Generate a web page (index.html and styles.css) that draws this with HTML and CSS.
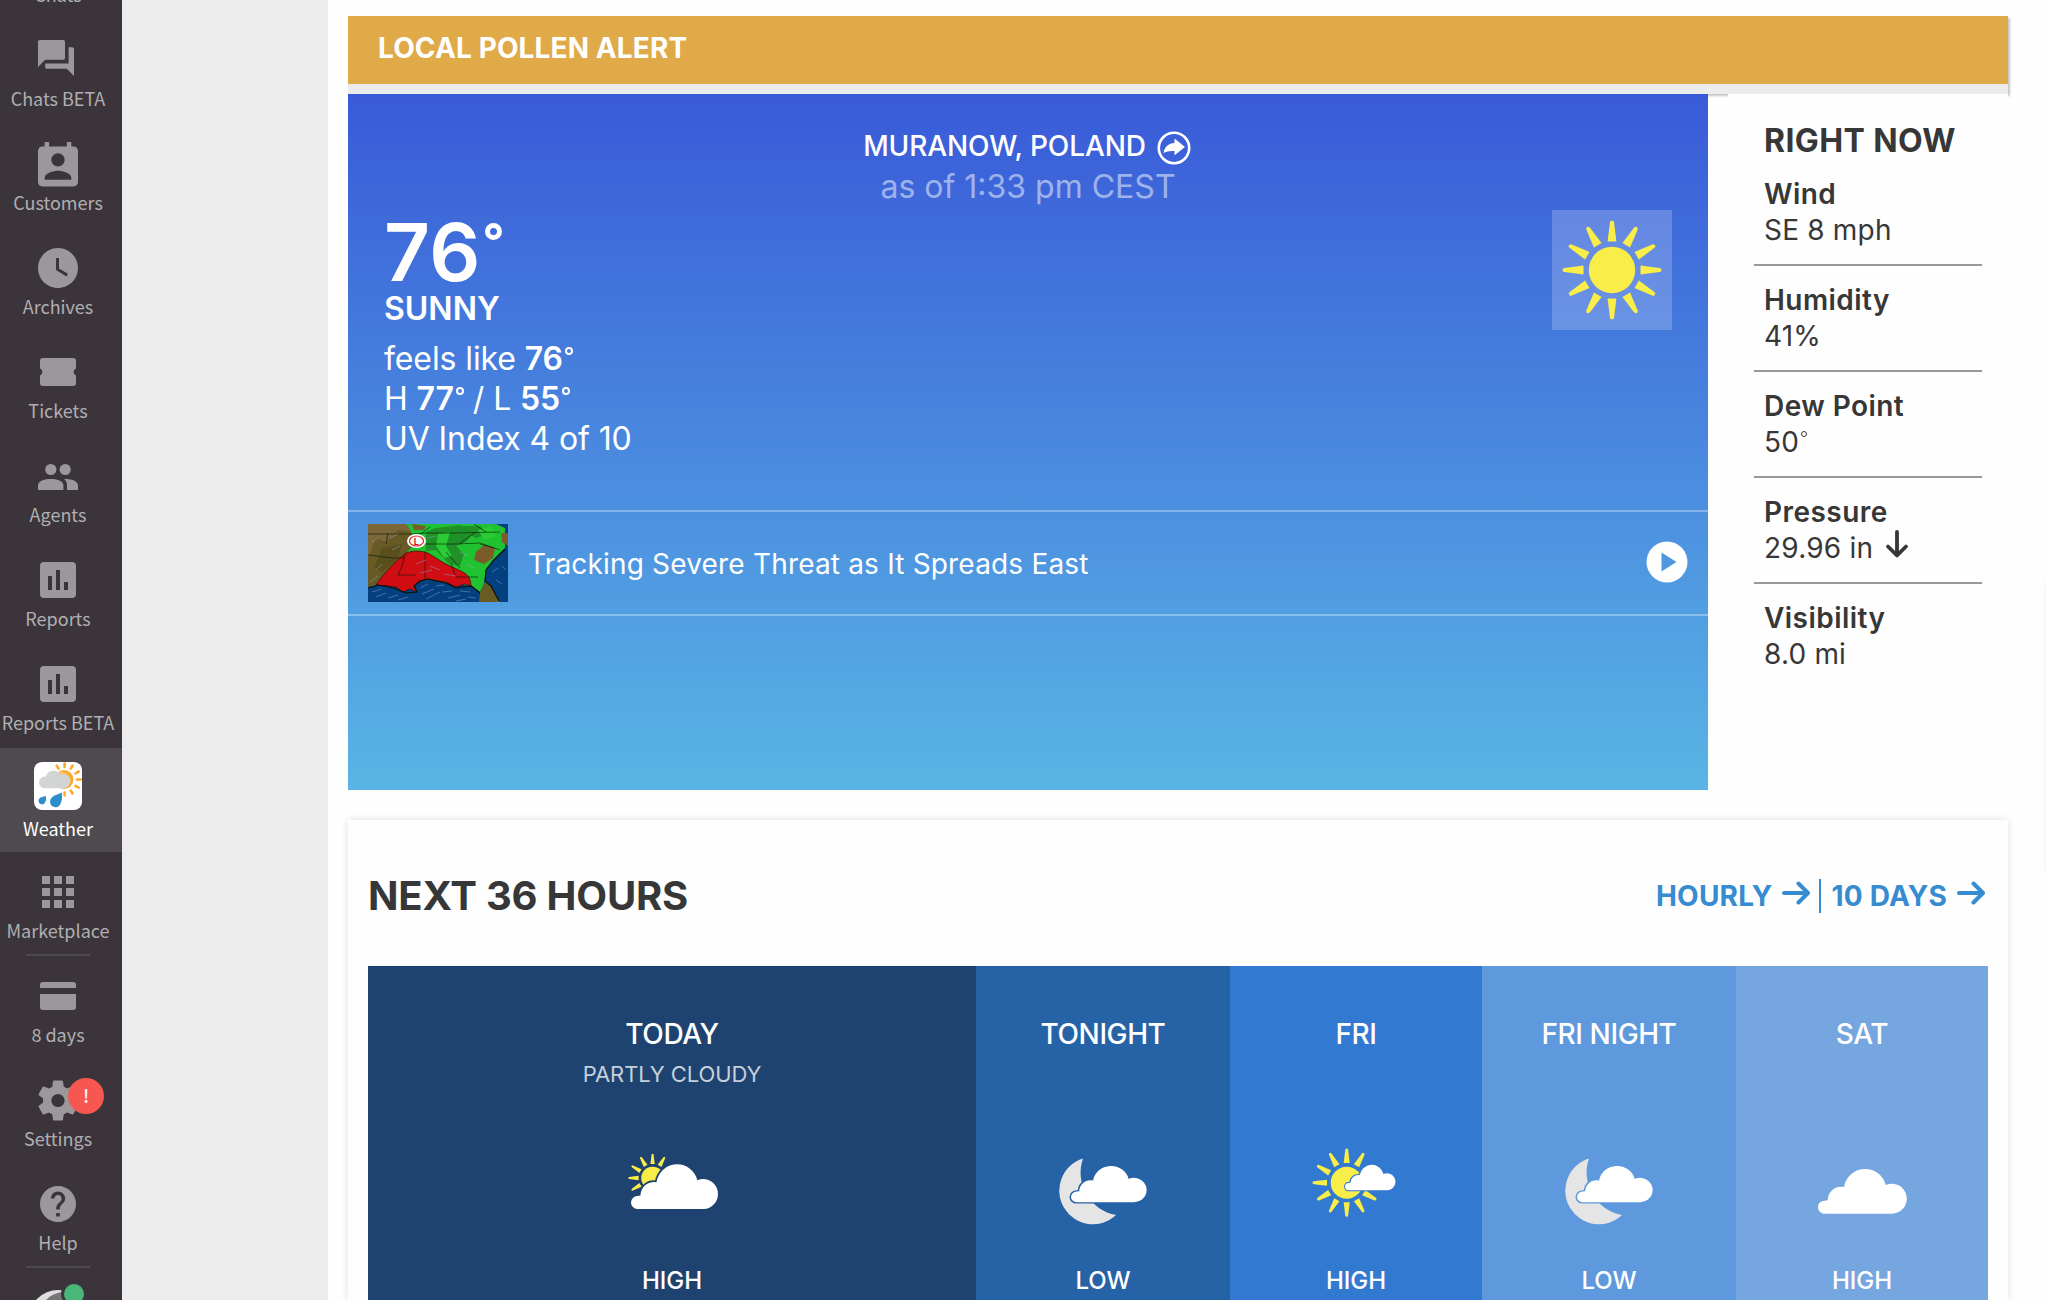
FILE: index.html
```html
<!DOCTYPE html>
<html lang="en">
<head>
<meta charset="utf-8">
<title>Weather</title>
<link rel="stylesheet" href="styles.css">
</head>
<body>
<svg class="defs" width="0" height="0" aria-hidden="true">
  <defs>
    <path id="ray" d="M-4.4-28.5L-2.1-47.6Q-1.8-49.6 0-49.6T2.1-47.6L4.4-28.5Z"/>
    <g id="sun">
      <circle r="23.2"/>
      <use href="#ray"/><use href="#ray" transform="rotate(30)"/><use href="#ray" transform="rotate(60)"/>
      <use href="#ray" transform="rotate(90)"/><use href="#ray" transform="rotate(120)"/><use href="#ray" transform="rotate(150)"/>
      <use href="#ray" transform="rotate(180)"/><use href="#ray" transform="rotate(210)"/><use href="#ray" transform="rotate(240)"/>
      <use href="#ray" transform="rotate(270)"/><use href="#ray" transform="rotate(300)"/><use href="#ray" transform="rotate(330)"/>
    </g>
    <path id="cloud" d="M6.5 45A6.5 6.5 0 0 1 6.5 32L9.7 31.6A13.5 13.5 0 0 1 26 18.3A21.3 21.3 0 0 1 67.7 16.3A15 15 0 1 1 73.5 45Z"/>
    <path id="moon" d="M40 18.5A33.6 33.6 0 1 0 73 75A43 43 0 0 1 40 18.5Z"/>
    <path id="report" d="M19 3H5a2 2 0 0 0-2 2v14a2 2 0 0 0 2 2h14a2 2 0 0 0 2-2V5a2 2 0 0 0-2-2zM9 17H7v-7h2zm4 0h-2V7h2zm4 0h-2v-4h2z"/>
  </defs>
</svg>

<nav class="sidebar">
  <a class="item"><span class="icon"></span><span class="label">Chats</span></a>
  <a class="item"><svg class="icon" viewBox="0 0 48 48"><path transform="translate(.4 .4) scale(1.8)" d="M21 6h-2v9H6v2c0 .55.45 1 1 1h11l4 4V7c0-.55-.45-1-1-1zm-4 6V3c0-.55-.45-1-1-1H3c-.55 0-1 .45-1 1v14l4-4h10c.55 0 1-.45 1-1z"/></svg><span class="label">Chats BETA</span></a>
  <a class="item"><svg class="icon" viewBox="0 0 48 48"><path transform="translate(-2.67 -.2) scale(2.222)" d="M19 3h-1V1h-2v2H8V1H6v2H5c-1.11 0-2 .9-2 2v14c0 1.1.89 2 2 2h14c1.1 0 2-.9 2-2V5c0-1.100-.9-2-2-2zm-7 3c1.660 0 3 1.340 3 3s-1.340 3-3 3-3-1.340-3-3 1.340-3 3-3zm6 12H6v-1c0-2 4-3.100 6-3.100s6 1.100 6 3.100z"/></svg><span class="label">Customers</span></a>
  <a class="item"><svg class="icon" viewBox="0 0 24 24"><path d="M12 2C6.500 2 2 6.500 2 12s4.500 10 10 10 10-4.500 10-10S17.500 2 12 2zm4.200 14.200L11 13V7h1.500v5.200l4.500 2.700z"/></svg><span class="label">Archives</span></a>
  <a class="item"><svg class="icon" viewBox="0 0 48 48"><path d="M9 10H39Q42 10 42 13V20.600A3.600 3.600 0 0 0 42 27.400V35Q42 38 39 38H9Q6 38 6 35V27.400A3.600 3.600 0 0 0 6 20.600V13Q6 10 9 10Z"/></svg><span class="label">Tickets</span></a>
  <a class="item"><svg class="icon" viewBox="0 0 48 48"><circle cx="16.800" cy="17.500" r="5.600"/><circle cx="31.200" cy="17.500" r="5.600"/><path d="M4 38V33.500C4 28.500 11 27 16.800 27S29.400 28.500 29.400 33.500V38ZM33 38V33.500C33 30.500 32.200 28.600 30 27C36 26.600 44 28.500 44 33.500V38Z"/></svg><span class="label">Agents</span></a>
  <a class="item"><svg class="icon" viewBox="0 0 24 24"><use href="#report"/></svg><span class="label">Reports</span></a>
  <a class="item"><svg class="icon" viewBox="0 0 24 24"><use href="#report"/></svg><span class="label">Reports BETA</span></a>
  <a class="item active"><svg class="icon" viewBox="0 0 48 48">
    <rect width="48" height="48" rx="8" fill="#fff"/>
    <circle cx="30" cy="17.500" r="9.400" fill="#fba92c"/>
    <g stroke="#fba92c" stroke-width="2.600" stroke-linecap="round"><path d="M30.600 1.500V5M38.500 3.600L36.700 6.700M44.700 9.500L41.500 11.300M46.800 17.500H43M44.700 25.600L41.500 23.800M38.500 31.500L36.700 28.500M30.600 33.500V30.500M22.700 3.600L24.500 6.700"/></g>
    <circle cx="27" cy="18" r="8.500" fill="#fff" opacity=".3"/>
    <path fill="#d2d5d4" d="M11 26.300A5.900 5.900 0 0 1 10.800 14.500H12A7.800 7.800 0 0 1 26.300 12.600A7.200 7.200 0 1 1 28.500 26.300Z"/>
    <path fill="#2e8dcb" d="M28 30.500C28 36 28.200 38 27 40.500A5.500 5.500 0 1 1 18 35.500C20.500 32.500 24 32.500 28 30.500ZM12 34C12 37.500 12 38.700 11.300 40A3.500 3.500 0 1 1 5.400 36.500C7 34.700 9 35 12 34Z"/>
  </svg><span class="label">Weather</span></a>
  <a class="item ruled"><svg class="icon" viewBox="0 0 24 24"><path d="M4 4h4v4H4zM10 4h4v4h-4zM16 4h4v4h-4zM4 10h4v4H4zM10 10h4v4h-4zM16 10h4v4h-4zM4 16h4v4H4zM10 16h4v4h-4zM16 16h4v4h-4z"/></svg><span class="label">Marketplace</span></a>
  <a class="item"><svg class="icon" viewBox="0 0 48 48"><path d="M6 16V13Q6 10 9 10H39Q42 10 42 13V16ZM6 22H42V35Q42 38 39 38H9Q6 38 6 35Z"/></svg><span class="label">8 days</span></a>
  <a class="item"><svg class="icon" viewBox="0 0 24 24"><path transform="translate(0 .25)" d="M19.430 12.980c.04-.32.07-.64.07-.98s-.03-.66-.07-.98l2.110-1.650c.19-.15.24-.42.12-.64l-2-3.460c-.12-.22-.39-.3-.61-.22l-2.490 1c-.52-.4-1.080-.73-1.690-.98l-.38-2.650C14.460 2.180 14.250 2 14 2h-4c-.25 0-.46.18-.49.42l-.38 2.650c-.61.25-1.170.59-1.690.98l-2.490-1c-.23-.09-.49 0-.61.22l-2 3.460c-.13.22-.07.49.12.64l2.110 1.650c-.04.32-.07.65-.07.98s.03.66.07.98l-2.110 1.650c-.19.15-.24.42-.12.64l2 3.460c.12.22.39.3.61.22l2.490-1c.52.4 1.080.73 1.690.98l.38 2.650c.03.24.24.42.49.42h4c.25 0 .46-.18.49-.42l.38-2.650c.61-.25 1.170-.59 1.690-.98l2.490 1c.23.09.49 0 .61-.22l2-3.460c.12-.22.07-.49-.12-.64zM12 15.300c-1.820 0-3.300-1.480-3.300-3.300s1.480-3.300 3.300-3.300 3.300 1.480 3.300 3.300-1.480 3.300-3.300 3.300z"/></svg><span class="label">Settings</span><span class="badge">!</span></a>
  <a class="item ruled"><svg class="icon" viewBox="0 0 24 24"><path transform="translate(1.200 1.200) scale(.9)" d="M12 2C6.480 2 2 6.480 2 12s4.480 10 10 10 10-4.480 10-10S17.520 2 12 2zm1 17h-2v-2h2zm2.070-7.750l-.9.920C13.450 12.900 13 13.500 13 15h-2v-.5c0-1.100.45-2.100 1.170-2.830l1.240-1.260c.37-.36.59-.86.59-1.410 0-1.100-.9-2-2-2s-2 .9-2 2H8c0-2.210 1.790-4 4-4s4 1.790 4 4c0 .88-.36 1.680-.93 2.250z"/></svg><span class="label">Help</span></a>
  <a class="item last"><svg class="avatar" viewBox="0 0 60 20"><circle cx="30" cy="39" r="29" fill="#dedede"/><path d="M18 20Q23 14 34 12V20Z" fill="#777577"/><circle cx="46" cy="14" r="13" fill="#3b353b"/><circle cx="46" cy="14" r="10" fill="#48b778"/></svg></a>
</nav>

<main class="page">
  <section class="alert"><h2>LOCAL POLLEN ALERT</h2></section>

  <div class="top">
    <section class="current">
      <header class="place">
        <h1>MURANOW, POLAND
          <svg width="34" height="34" viewBox="0 0 34 34"><circle cx="17" cy="17" r="15.200" fill="none" stroke="#fff" stroke-width="2.600"/><path fill="#fff" d="M17.500 7.500L28 16L17.500 24.300V20C12.500 19.600 9.500 20.500 6.500 22C7.500 16 11.500 12.300 17.500 12Z"/></svg>
        </h1>
        <p>as of 1:33 pm CEST</p>
      </header>
      <div class="conditions">
        <div>
          <p class="temp">76<i class="deg big"></i></p>
          <p class="phrase">SUNNY</p>
          <p class="line">feels like <b>76<i class="deg"></i></b></p>
          <p class="line">H <b>77<i class="deg"></i></b> / L <b>55<i class="deg"></i></b></p>
          <p class="line uv">UV Index 4 of 10</p>
        </div>
        <svg class="sky" viewBox="-60 -60 120 120"><use href="#sun" fill="#f9ed49"/></svg>
      </div>
      <a class="video">
        <svg class="thumb" viewBox="0 0 140 78">
          <rect width="140" height="78" fill="#043f80"/>
          <path fill="#685a24" d="M0 0H58L50 28L8 61L0 63Z"/>
          <path fill="#8a6f48" d="M0 0H50L44 8L30 6L18 18L8 14L0 34Z" opacity=".6"/>
          <path fill="#4a4415" d="M14 24L34 20L30 34L14 48L6 44Z" opacity=".5"/>
          <path fill="#21c232" d="M38 0H128L137 4V24L125 36L118 46L116 60L112 68L104 62L50 54L39 28L47 20L42 5Z"/>
          <path fill="#1f9127" d="M58 8L68 4L92 1L106 8L98 18L88 22L96 30L92 42L80 39L68 26L58 27ZM86 2H112L120 10L108 14Z"/>
          <path fill="#2acb35" d="M70 10L82 8L78 22L84 32L76 34L68 22ZM110 6L124 2L128 12L116 16Z"/>
          <path fill="#7c5b2b" d="M108 28L116 21L127 24L125 34L116 40L106 36ZM133 9H140V22L134 18ZM44 0L58 2L56 6L46 6Z"/>
          <path fill="#d00d12" stroke="#300" stroke-width=".6" d="M8 61Q21 42 38 29Q48 25 60 29L76 39L95 48Q103 52 103 62L97 60L88 63L78 58L70 57L60 55L52 57L46 62L49 68L42 65L35 68L28 63L18 62Z"/>
          <path fill="#695b22" d="M112 68L118 57L122 61L127 69L132 78H111Z"/>
          <g fill="none" stroke="#091507" stroke-width=".6"><path d="M0 10H44L58 9H88L132 8M52 20L88 20L112 19L132 26M37 30L34 42L30 51H48M57 27V56M83 39L88 53H110M92 19L108 8M62 3L50 12L44 24M106 0L118 8M112 20L126 24M78 28L92 44M18 20L20 9M0 31L24 34L37 34"/><path stroke-width="1.200" d="M8 61L18 62L28 65L38 69L49 68L46 62L52 57L60 55L78 59L88 64L103 62L112 69M0 64L8 62M137 25L125 37L118 46L117 57L123 62L131 77"/></g>
          <g fill="none" stroke="#8fb0d8" stroke-width=".6" opacity=".75"><path d="M4 68L14 65M8 73L18 69M20 74L30 71M30 76L40 73M52 64L60 60M54 70L66 65M58 75L72 68M68 62L76 61M74 68L84 67M80 74L92 71M92 67L102 68M88 77L98 75M100 73L108 74M124 48L130 44M134 42L138 46M128 56L134 60M2 58L10 52M8 46L14 40M48 40L58 36M62 42L72 46M52 49L64 46M76 50L88 52M4 18L10 14M22 14L30 10M24 26L32 22M60 14L68 12M98 40L106 44M92 28L100 32"/></g>
          <ellipse cx="48.500" cy="17" rx="9.500" ry="7" fill="#fff"/><ellipse cx="48.500" cy="17" rx="7" ry="5" fill="none" stroke="#e2222c" stroke-width="1.200"/><text x="45.800" y="20.500" font-size="9" font-weight="700" fill="#d8141d">L</text>
        </svg>
        <span class="headline">Tracking Severe Threat as It Spreads East</span>
        <svg class="play" viewBox="0 0 42 42"><circle cx="21" cy="21" r="20.500" fill="#fff"/><path d="M15.500 11.500L30.500 21L15.500 30.500Z" fill="#4f98e0"/></svg>
      </a>
    </section>

    <section class="now">
      <h2>RIGHT NOW</h2>
      <dl>
        <div><dt>Wind</dt><dd>SE 8 mph</dd></div>
        <div><dt>Humidity</dt><dd>41%</dd></div>
        <div><dt>Dew Point</dt><dd>50<i class="deg small"></i></dd></div>
        <div><dt>Pressure</dt><dd>29.96 in <svg class="trend" viewBox="0 0 24 30"><path d="M12 3V26M3 17.500L12 26.500L21 17.500" fill="none" stroke="#373737" stroke-width="3.800" stroke-linecap="round" stroke-linejoin="round"/></svg></dd></div>
        <div><dt>Visibility</dt><dd>8.0 mi</dd></div>
      </dl>
    </section>
    <aside class="rail"></aside>
  </div>

  <section class="next">
    <header>
      <h2>NEXT 36 HOURS</h2>
      <nav class="links">
        <a>HOURLY <svg viewBox="0 0 28 24"><path d="M2 12H25M16.500 2.500L26 12L16.500 21.500"/></svg></a>
        <a>10 DAYS <svg viewBox="0 0 28 24"><path d="M2 12H25M16.500 2.500L26 12L16.500 21.500"/></svg></a>
      </nav>
    </header>
    <div class="periods">
      <article class="today"><h3>TODAY</h3><p class="sub">PARTLY CLOUDY</p>
        <svg viewBox="0 0 120 100"><use href="#sun" fill="#f9ed49" transform="translate(40.600 38) scale(.49)"/><use href="#cloud" class="fog" transform="translate(19 24) scale(.98 1)"/></svg>
        <p class="hl">HIGH</p></article>
      <article class="tonight"><h3>TONIGHT</h3><p class="sub"></p>
        <svg viewBox="0 0 120 100"><use href="#moon" fill="#e5e5e5"/><use href="#cloud" class="fog" transform="translate(28 25.700) scale(.852 .81)"/></svg>
        <p class="hl">LOW</p></article>
      <article class="fri"><h3>FRI</h3><p class="sub"></p>
        <svg viewBox="0 0 120 100"><use href="#sun" fill="#f9ed49" transform="translate(50.700 42.700) scale(.69)"/><use href="#cloud" class="fog" transform="translate(49 24.700) scale(.568)"/></svg>
        <p class="hl">HIGH</p></article>
      <article class="fri-night"><h3>FRI NIGHT</h3><p class="sub"></p>
        <svg viewBox="0 0 120 100"><use href="#moon" fill="#e5e5e5"/><use href="#cloud" class="fog" transform="translate(28 25.700) scale(.852 .81)"/></svg>
        <p class="hl">LOW</p></article>
      <article class="sat"><h3>SAT</h3><p class="sub"></p>
        <svg viewBox="0 0 120 100"><use href="#cloud" fill="#fff" transform="translate(16 28.700)"/></svg>
        <p class="hl">HIGH</p></article>
    </div>
  </section>
</main>
</body>
</html>
```
FILE: styles.css
```css
* { box-sizing: border-box; margin: 0; padding: 0; }
html { overflow: hidden; }
body {
  display: flex;
  height: 1300px;
  overflow: hidden;
  background: #ececec;
  color: #373737;
  font-family: Inter, "Liberation Sans", sans-serif;
  font-size: 28px;
}
.defs { position: absolute; }

/* Sidebar */
.sidebar {
  flex: none;
  width: 122px;
  height: 1384px;
  margin-top: -84px;
  background: #3b353b;
  font-family: "Noto Sans CJK SC", sans-serif;
}
.item {
  position: relative;
  display: flex;
  flex-direction: column;
  align-items: center;
  height: 104px;
  padding: 16px 6px 0 0;
  color: #b1aeb1;
}
.icon { flex: none; width: 48px; height: 48px; fill: #9b989b; }
.label {
  margin-top: 2px;
  font-size: 18px;
  line-height: 24px;
  white-space: nowrap;
}
.active { padding-top: 14px; background: #4f4a50; color: #fff; }
.active .label { margin-top: 6px; }
.ruled::after {
  content: "";
  width: 64px;
  height: 2px;
  margin-top: 12px;
  background: #4f4a50;
}
.badge {
  position: absolute;
  left: 68px;
  top: 18px;
  width: 36px;
  height: 36px;
  border-radius: 50%;
  background: #f65851;
  color: #fff;
  font-size: 18px;
  font-weight: 500;
  line-height: 34px;
  text-align: center;
}
.last { height: 32px; padding-top: 12px; }
.avatar { flex: none; width: 60px; height: 20px; }

/* Page */
.page {
  flex: 1;
  min-width: 0;
  height: 1300px;
  margin-left: 206px;
  padding: 16px 0 0 20px;
  overflow: hidden;
  background: #fefefe;
}
.alert {
  width: 1660px;
  height: 78px;
  padding: 0 30px;
  border-bottom: 10px solid #ececec;
  background: #e0aa49;
  background-clip: padding-box;
  box-shadow: 2px 2px 2px rgba(0, 0, 0, .22);
  color: #fff;
}
.alert h2 { font-size: 28px; line-height: 64px; letter-spacing: .12px; }

.top { position: relative; display: flex; width: 1720px; height: 696px; }
.current {
  display: flex;
  flex-direction: column;
  width: 1360px;
  background: linear-gradient(#395ad8, #59b5e5);
  color: #fff;
}
.place { padding-top: 32px; text-align: center; }
.place h1 {
  display: flex;
  justify-content: center;
  align-items: center;
  gap: 11px;
  font-size: 28px;
  font-weight: 500;
  line-height: 40px;
  letter-spacing: -.1px;
}
.place h1 svg { margin: 3px 2px 0 0; }
.place p { margin: 1px 0 -1px; color: rgba(255, 255, 255, .5); font-size: 32px; line-height: 40px; }
.conditions {
  display: flex;
  justify-content: space-between;
  height: 304px;
  padding: 4px 36px 0;
}
.temp { height: 80px; margin-top: 2px; font-size: 80px; font-weight: 600; line-height: 80px; letter-spacing: .5px; }
.phrase { margin-bottom: 13px; font-size: 32px; font-weight: 600; line-height: 34px; }
.line { font-size: 32px; line-height: 40px; letter-spacing: -.1px; }
.line b { font-weight: 600; }
/* Small ring set at cap height */
.deg {
  display: inline-block;
  width: 8px;
  height: 8px;
  margin-left: 2px;
  border: 2px solid;
  border-radius: 50%;
  vertical-align: 15px;
}
.deg.big { width: 17px; height: 17px; margin-left: 4px; border-width: 5px; vertical-align: 41px; }
.deg.small { width: 6px; height: 6px; border-width: 1px; vertical-align: 15px; }
.sky { width: 120px; height: 120px; background: rgba(255, 255, 255, .2); }
.video {
  display: flex;
  align-items: center;
  height: 106px;
  padding: 0 20px;
  border: solid rgba(255, 255, 255, .32);
  border-width: 2px 0;
}
.thumb { width: 140px; height: 78px; margin-right: 20px; }
.headline { padding-top: 2px; letter-spacing: .18px; }
.play { width: 42px; height: 42px; margin: -3px 0 0 auto; }

.now { width: 280px; margin-left: 20px; padding: 27px 26px 0; background: #fefefe; }
.now h2 { padding-left: 10px; font-size: 32px; line-height: 39px; letter-spacing: .4px; white-space: nowrap; }
.now dl div { height: 106px; padding: 16px 0 16px 10px; border-bottom: 2px solid #999; }
.now dl div:last-child { border: 0; }
.now dt { font-weight: 600; line-height: 36px; letter-spacing: .45px; }
.now dd { height: 36px; line-height: 36px; letter-spacing: .2px; white-space: nowrap; }
.trend { width: 24px; height: 30px; margin: -8px 0 0 4px; vertical-align: -1px; }

/* Left edge of the neighbouring column */
.rail { width: 20px; height: 290px; margin: 488px 0 0 40px; box-shadow: 0 0 6px rgba(0, 0, 0, .12); background: #fff; }

.next {
  width: 1660px;
  height: 480px;
  margin-top: 30px;
  padding: 0 20px;
  background: #fefefe;
  box-shadow: 0 0 8px rgba(0, 0, 0, .12);
}
.next header { display: flex; justify-content: space-between; align-items: center; height: 146px; padding-top: 5px; }
.next header h2 { font-size: 40px; letter-spacing: -.2px; }
.links { display: flex; padding-right: 3px; color: #378bd0; font-weight: 700; letter-spacing: .2px; }
.links a { display: flex; align-items: center; height: 34px; gap: 10px; line-height: 34px; }
.links a + a { margin-left: 9px; padding-left: 10px; border-left: 2px solid; }
.links svg { width: 28px; height: 24px; margin-top: -6px; fill: none; stroke: currentColor; stroke-width: 4; stroke-linecap: round; stroke-linejoin: round; }

.periods { display: grid; grid-template-columns: 608px 254px 252px 254px 252px; height: 334px; color: #fff; text-align: center; }
.periods article { padding-top: 48px; }
.periods h3 { font-size: 28px; font-weight: 500; line-height: 40px; letter-spacing: -.4px; }
.sub { height: 40px; color: rgba(255, 255, 255, .75); font-size: 22px; line-height: 40px; letter-spacing: -.1px; }
.periods svg { display: block; width: 120px; height: 100px; margin: 46px auto 21px; }
.hl { font-size: 24px; font-weight: 500; line-height: 40px; }
.today { background: #1e4370; }
.tonight { background: #2662a6; }
.fri { background: #3279d2; }
.fri-night { background: #5e99de; }
.sat { background: #76a6e0; }
.fog { fill: #fff; stroke-width: 3.600; paint-order: stroke; }
.today .fog { stroke: #1e4370; }
.tonight .fog { stroke: #2662a6; }
.fri .fog { stroke: #3279d2; }
.fri-night .fog { stroke: #5e99de; }
```
